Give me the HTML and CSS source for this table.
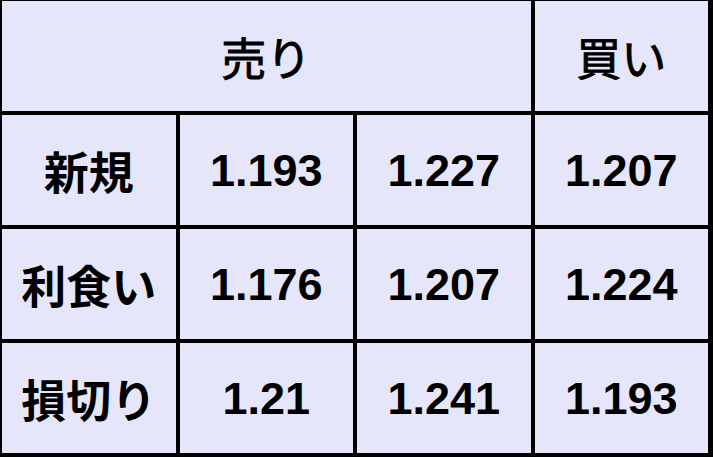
FILE: index.html
```html
<!DOCTYPE html>
<html lang="ja">
<head>
<meta charset="utf-8">
<title>売り買い</title>
<link rel="stylesheet" href="styles.css">
</head>
<body>
<div class="board">
  <div class="cell head span3">売り</div>
  <div class="cell head">買い</div>

  <div class="cell label">新規</div>
  <div class="cell num">1.193</div>
  <div class="cell num">1.227</div>
  <div class="cell num">1.207</div>

  <div class="cell label">利食い</div>
  <div class="cell num">1.176</div>
  <div class="cell num">1.207</div>
  <div class="cell num">1.224</div>

  <div class="cell label">損切り</div>
  <div class="cell num">1.21</div>
  <div class="cell num">1.241</div>
  <div class="cell num">1.193</div>
</div>
</body>
</html>
```
FILE: styles.css
```css
html, body {
  margin: 0;
  padding: 0;
  background: #000;
}
.board {
  width: 713px;
  height: 457px;
  box-sizing: border-box;
  padding: 1px 5px 4px 2px;
  background: #000;
  display: grid;
  grid-template-columns: repeat(4, 1fr);
  grid-template-rows: repeat(4, 1fr);
  gap: 4px;
}
.cell {
  background: #e6e6fa;
  display: flex;
  align-items: center;
  justify-content: center;
  color: #000;
  font-size: 45px;
  line-height: 1;
}
.span3 {
  grid-column: span 3;
}
.head {
  font-family: "Noto Sans CJK JP", "Noto Sans", sans-serif;
  font-weight: 400;
  -webkit-text-stroke: 0.9px #000;
}
.label {
  font-family: "Noto Sans CJK JP", "Noto Sans", sans-serif;
  font-weight: 700;
}
.num {
  font-family: "Liberation Sans", Arial, sans-serif;
  font-weight: 700;
}
```
